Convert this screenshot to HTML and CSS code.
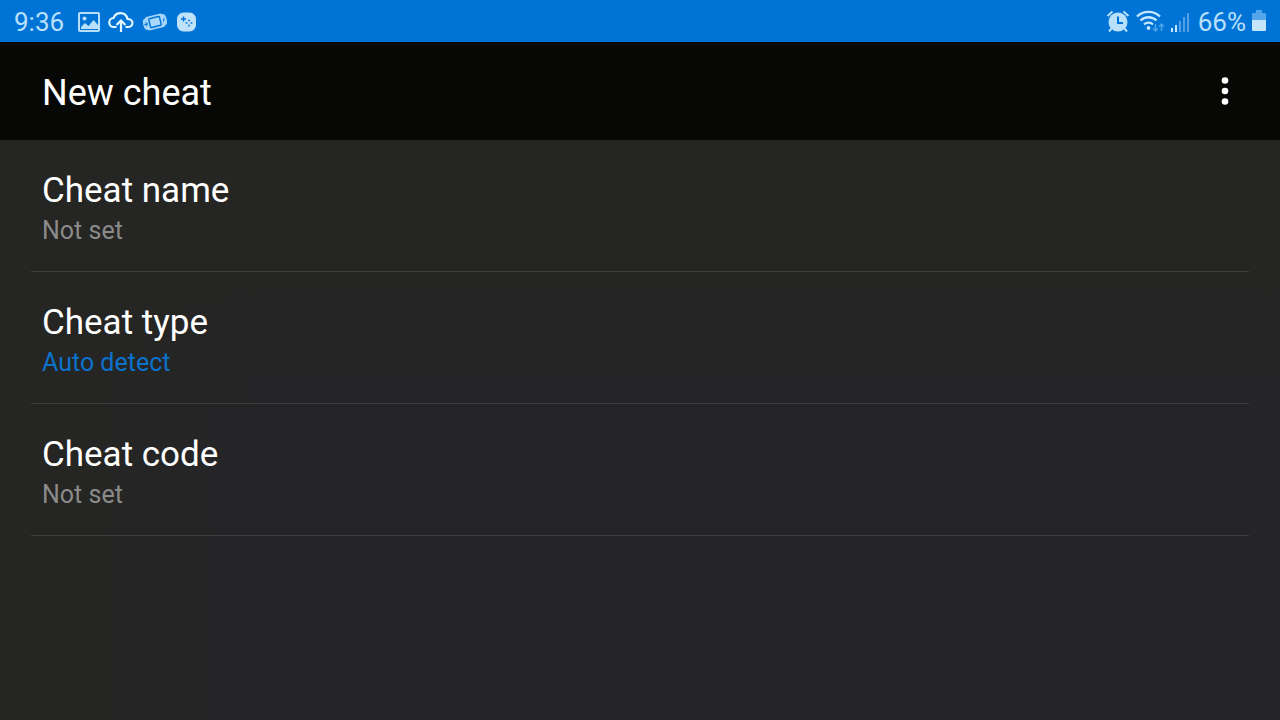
FILE: index.html
```html
<!DOCTYPE html>
<html lang="en">
  <head>
    <meta charset="UTF-8" />
    <meta name="viewport" content="width=device-width, initial-scale=1.0" />
    <title>New cheat</title>
    <link rel="stylesheet" href="styles.css">
  </head>
  <body>
    <div class="status-bar">
      <div class="status-left">
        <span class="clock">9:36</span>
        <div class="notifications">
          <!-- Picture -->
          <svg width="22" height="22" viewBox="0 0 22 22" fill="none">
            <rect x="1" y="2" width="20" height="18" rx="1" stroke="#b9e0fb" stroke-width="2" />
            <circle cx="6.5" cy="7.5" r="2" fill="#b9e0fb" />
            <path d="M3 18v-2l4-4 3.500 3 5-6 4.500 5v4z" fill="#b9e0fb" />
          </svg>
          <!-- Cloud upload -->
          <svg width="26" height="22" viewBox="0 0 26 22" fill="none" stroke="#e3f6ff" stroke-width="2.2">
            <path d="M8.500 16H6a4.500 4.500 0 0 1-.5-9C7 3.500 9.500 2.200 12.500 2.200c3.600 0 6.200 2.300 6.800 5.600 3 .1 5.200 1.900 5.200 4.300S22.500 16 20 16h-2.500" />
            <path d="M13 21v-11M8.500 14l4.500-4.500 4.500 4.500" />
          </svg>
          <!-- Handheld console -->
          <svg width="26" height="22" viewBox="0 0 26 22">
            <g transform="rotate(-14 13 11)">
              <path d="M3.500 5.500l2-1.500h15l2 1.500q2.500 0 2.500 5.500t-2.500 5.500l-2 1.500h-15l-2-1.500Q1 16.500 1 11t2.500-5.500z" fill="#a3d5f8" />
              <rect x="7.500" y="6.500" width="11" height="9" rx="1" fill="#a9d9fa" stroke="#0074d6" stroke-width="1.400" />
              <path d="M4 9v4M2 11h4M21 12.500l2-3" stroke="#0074d6" stroke-width="1" />
            </g>
          </svg>
          <!-- Game launcher -->
          <svg width="20" height="22" viewBox="0 0 20 22">
            <rect x="1" y="1.500" width="19" height="19" rx="6.500" fill="#bfe2fb" />
            <path d="M7.500 5.500v5M5 8h5" stroke="#0074d6" stroke-width="1.500" />
            <g fill="#2a8bdd">
              <circle cx="13" cy="9.500" r="1.100" />
              <circle cx="13" cy="14.500" r="1.100" />
              <circle cx="10.500" cy="12" r="1.100" />
              <circle cx="15.500" cy="12" r="1.100" />
            </g>
          </svg>
        </div>
      </div>
      <div class="status-right">
        <!-- Alarm -->
        <svg width="24" height="24" viewBox="0 0 24 24" fill="none" stroke="#b9e0fb">
          <circle cx="12" cy="12" r="9.500" fill="#b9e0fb" stroke="none" />
          <path d="M1.500 6l5-4.500M22.500 6l-5-4.500M5.500 18.500l-2.500 3M18.500 18.500l2.500 3" stroke-width="2" />
          <path d="M12 6.500v6.500h5" stroke="#0074d6" stroke-width="2" />
        </svg>
        <!-- Wi-Fi with traffic arrows -->
        <svg width="29" height="24" viewBox="0 0 29 24" fill="none" stroke="#c3e8ff" stroke-width="2.3">
          <path d="M1 6.500a16.500 16.500 0 0 1 23 0M4.500 10.500a11.500 11.500 0 0 1 16 0M8 14.500a6.500 6.500 0 0 1 9 0" />
          <circle cx="12.500" cy="18" r="1.900" fill="#c3e8ff" stroke="none" />
          <path d="M19.500 14v7M17 18.500l2.500 2.500 2.500-2.500M25.500 21v-7M23 16.500l2.500-2.500 2.500 2.500" stroke="#4da3e8" stroke-width="1.500" />
        </svg>
        <!-- Signal strength -->
        <svg width="21" height="24" viewBox="0 0 21 24">
          <path d="M0 18h2v4H0zM4 15h2v7H4z" fill="#c3e8ff" />
          <path d="M8 11h2v11H8zM12 7h2v15h-2zM16 3h2v19h-2z" fill="#559fe5" />
        </svg>
        <span class="battery-level">66%</span>
        <!-- Battery -->
        <svg width="14" height="24" viewBox="0 0 14 24">
          <path d="M4 0h6v3h3q1 0 1 1v6H0V4q0-1 1-1h3z" fill="#55a5ea" />
          <path d="M0 10h14v10q0 1-1 1H1q-1 0-1-1z" fill="#c5e5fc" />
        </svg>
      </div>
    </div>

    <header class="app-bar">
      <h1>New cheat</h1>
      <button type="button" class="menu-btn" aria-label="More options">
        <svg width="8" height="30" viewBox="0 0 8 30" fill="#fff">
          <circle cx="4" cy="4.500" r="3.300" />
          <circle cx="4" cy="15" r="3.300" />
          <circle cx="4" cy="25.500" r="3.300" />
        </svg>
      </button>
    </header>

    <main class="settings">
      <button type="button" class="setting">
        <span class="setting-title">Cheat name</span>
        <span class="setting-value">Not set</span>
      </button>
      <button type="button" class="setting">
        <span class="setting-title">Cheat type</span>
        <span class="setting-value selected">Auto detect</span>
      </button>
      <button type="button" class="setting">
        <span class="setting-title">Cheat code</span>
        <span class="setting-value">Not set</span>
      </button>
    </main>
  </body>
</html>
```
FILE: styles.css
```css
* {
  margin: 0;
  padding: 0;
  box-sizing: border-box;
}

body {
  font-family: Roboto, sans-serif;
  background:
    linear-gradient(to bottom, #252523 35%, rgba(37, 37, 35, 0) 58%),
    linear-gradient(to right, #252523 5%, #252528 20%);
  color: #fff;
  min-height: 100vh;
}

svg {
  display: block;
}

/* Status bar */
.status-bar {
  display: flex;
  justify-content: space-between;
  align-items: center;
  height: 42px;
  padding: 2px 14px 0;
  background: #0074d6;
  color: #b9e0fb;
  font-size: 26px;
}

.status-left,
.status-right,
.notifications {
  display: flex;
  align-items: center;
}

.status-left {
  gap: 14px;
}

.notifications {
  gap: 8px;
}

.status-right {
  gap: 6px;
}

/* App bar */
.app-bar {
  display: flex;
  justify-content: space-between;
  align-items: center;
  height: 98px;
  padding: 0 43px 0 42px;
  background: #070806;
}

.app-bar h1 {
  padding-top: 3px;
  font-size: 36px;
  font-weight: 400;
}

.menu-btn {
  padding: 8px;
  border: none;
  background: none;
  cursor: pointer;
}

/* Settings list */
.settings {
  padding: 0 31px;
}

.setting {
  display: flex;
  flex-direction: column;
  width: 100%;
  padding: 29px 11px 23px;
  border: none;
  border-bottom: 1px solid #3d3d3e;
  background: none;
  color: #fff;
  font-family: inherit;
  text-align: left;
  cursor: pointer;
}

.setting-title {
  font-size: 35px;
  line-height: 44px;
}

.setting-value {
  color: #8b8b8a;
  font-size: 25px;
  line-height: 35px;
}

.setting-value.selected {
  color: #0b72cc;
}
```
